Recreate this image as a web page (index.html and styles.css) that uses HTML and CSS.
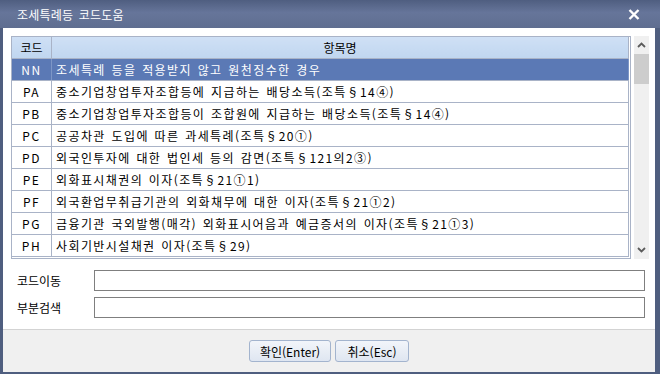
FILE: index.html
```html
<!DOCTYPE html>
<html lang="ko">
<head>
    <meta charset="UTF-8">
    <title>조세특례등 코드도움</title>
    <link rel="stylesheet" href="styles.css">
</head>
<body>
    <div class="window">
        <div class="titlebar">
            <span class="title">조세특례등 코드도움</span>
            <svg class="close" width="12" height="11" viewBox="0 0 12 11">
                <path d="M1.5 1 L10.5 10 M10.5 1 L1.5 10" stroke="#fff" stroke-width="2.4" fill="none"/>
            </svg>
        </div>
        <div class="frame">
            <div class="main">
                <div class="list-row">
                    <div class="grid">
                        <table>
                            <thead>
                                <tr><th class="col-code">코드</th><th>항목명</th></tr>
                            </thead>
                            <tbody>
                                <tr class="selected"><td class="col-code">NN</td><td>조세특례 등을 적용받지 않고 원천징수한 경우</td></tr>
                                <tr><td class="col-code">PA</td><td>중소기업창업투자조합등에 지급하는 배당소득(조특§14④)</td></tr>
                                <tr><td class="col-code">PB</td><td>중소기업창업투자조합등이 조합원에 지급하는 배당소득(조특§14④)</td></tr>
                                <tr><td class="col-code">PC</td><td>공공차관 도입에 따른 과세특례(조특§20①)</td></tr>
                                <tr><td class="col-code">PD</td><td>외국인투자에 대한 법인세 등의 감면(조특§121의2③)</td></tr>
                                <tr><td class="col-code">PE</td><td>외화표시채권의 이자(조특§21①1)</td></tr>
                                <tr><td class="col-code">PF</td><td>외국환업무취급기관의 외화채무에 대한 이자(조특§21①2)</td></tr>
                                <tr><td class="col-code">PG</td><td>금융기관 국외발행(매각) 외화표시어음과 예금증서의 이자(조특§21①3)</td></tr>
                                <tr><td class="col-code">PH</td><td>사회기반시설채권 이자(조특§29)</td></tr>
                            </tbody>
                        </table>
                    </div>
                    <div class="scrollbar">
                        <svg class="arrow" width="9" height="6" viewBox="0 0 9 6">
                            <path d="M1 5 L4.5 1.5 L8 5" stroke="#5c5c5c" stroke-width="1.8" fill="none"/>
                        </svg>
                        <div class="thumb"></div>
                        <div class="track"></div>
                        <svg class="arrow" width="9" height="6" viewBox="0 0 9 6">
                            <path d="M1 1 L4.5 4.5 L8 1" stroke="#5c5c5c" stroke-width="1.8" fill="none"/>
                        </svg>
                    </div>
                </div>

                <div class="form">
                    <div class="form-row">
                        <label class="label">코드이동</label>
                        <input type="text" class="field">
                    </div>
                    <div class="form-row">
                        <label class="label">부분검색</label>
                        <input type="text" class="field">
                    </div>
                </div>
            </div>
            <div class="footer">
                <button class="btn btn-ok">확인(Enter)</button>
                <button class="btn btn-cancel">취소(Esc)</button>
            </div>
        </div>
    </div>
</body>
</html>
```

FILE: styles.css
```css
html, body {
    margin: 0;
    padding: 0;
}
body {
    font-family: "Noto Sans CJK KR", "Liberation Sans", sans-serif;
    font-size: 12px;
    color: #000;
    background: #4f5e7f;
}
.window {
    width: 660px;
    height: 374px;
    display: flex;
    flex-direction: column;
    overflow: hidden;
}
.titlebar {
    height: 28px;
    flex: none;
    display: flex;
    align-items: center;
    justify-content: space-between;
    padding: 0 20px 0 17px;
    background: linear-gradient(#4f5e80, #66759a 45%, #5f6e90);
}
.title {
    color: #fff;
    font-size: 12px;
    letter-spacing: 0.2px;
    word-spacing: 2px;
}
.close {
    display: block;
    margin-top: 1px;
}
.frame {
    flex: 1;
    display: flex;
    flex-direction: column;
    border-left: 3px solid #4f5e7f;
    border-right: 5px solid #4f5e7f;
    border-bottom: 2px solid #4f5e7f;
    background: #fff;
}
.main {
    padding: 8px 6px 11px 8px;
}
.list-row {
    display: flex;
    gap: 3px;
}
.grid {
    width: 618px;
    height: 221px;
    border: 1px solid #a9b3c7;
    overflow: hidden;
}
table {
    border-collapse: collapse;
    width: 617px;
    table-layout: fixed;
}
th, td {
    height: 21px;
    padding: 0;
    border-right: 1px solid #a9b3c7;
    border-bottom: 1px solid #a9b3c7;
    white-space: nowrap;
    line-height: 21px;
    font-weight: normal;
    word-spacing: 1px;
}
th {
    background: linear-gradient(#cfe0f5, #c0d6f0);
    text-align: center;
}
td {
    padding-left: 4px;
    letter-spacing: 1.4px;
}
.col-code {
    width: 39px;
    text-align: center;
    padding-left: 0;
}
td.col-code {
    letter-spacing: 1.5px;
}
.selected td {
    background: #5b79b5;
    color: #fff;
    border-right-color: #7d96c6;
}
.scrollbar {
    width: 15px;
    height: 223px;
    background: #f0f0f0;
    display: flex;
    flex-direction: column;
    align-items: center;
}
.arrow {
    display: block;
    flex: none;
    margin: 6px 0;
}
.thumb {
    width: 15px;
    height: 30px;
    background: #cdcdcd;
}
.track {
    flex: 1;
}
.form {
    margin-top: 11px;
    padding: 0 4px 0 6px;
    display: flex;
    flex-direction: column;
    gap: 6px;
}
.form-row {
    display: flex;
    align-items: center;
}
.label {
    width: 77px;
    flex: none;
}
.field {
    flex: 1;
    height: 21px;
    box-sizing: border-box;
    border: 1px solid #7f7f7f;
    margin: 0;
    padding: 0 3px;
    font-family: inherit;
    font-size: 12px;
    background: #fff;
}
.footer {
    flex: 1;
    border-top: 1px solid #d3d3d3;
    background: #f0f0f0;
    display: flex;
    justify-content: center;
    align-items: flex-start;
    gap: 4px;
    padding-top: 10px;
}
.btn {
    height: 22px;
    padding: 0;
    border: 1px solid #a3b4ce;
    border-radius: 3px;
    background: linear-gradient(#f2f5fa, #dfe6f1);
    font-family: inherit;
    font-size: 12px;
    color: #000;
    cursor: pointer;
}
.btn-ok {
    width: 82px;
}
.btn-cancel {
    width: 74px;
}
```
